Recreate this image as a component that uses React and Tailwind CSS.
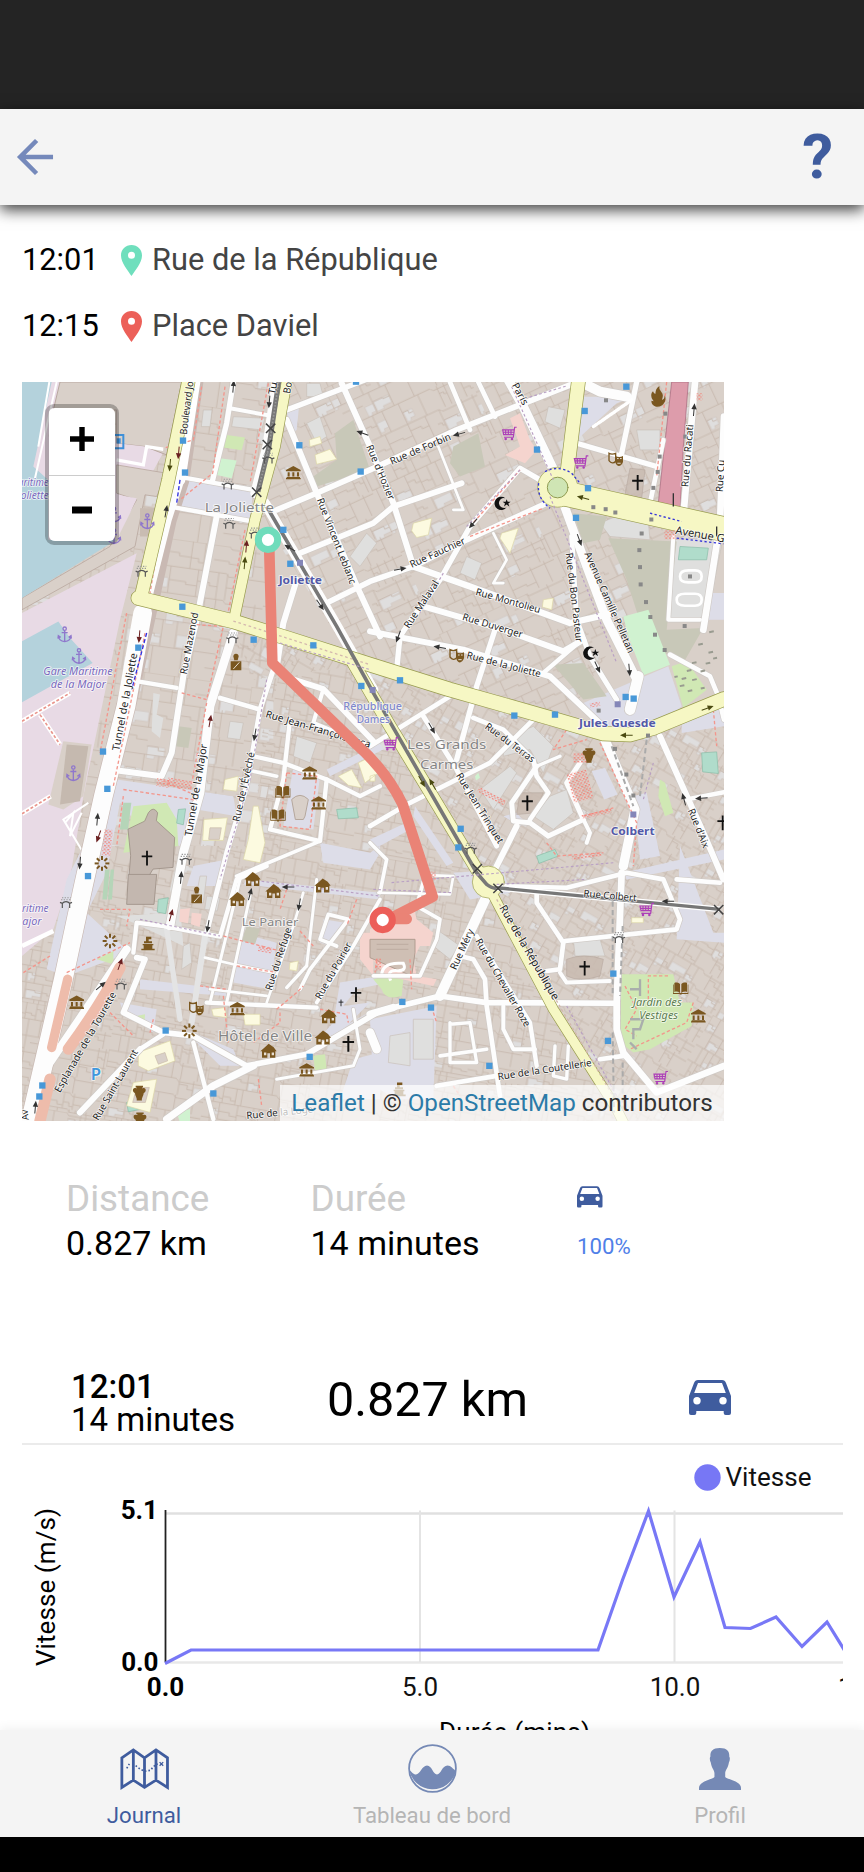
import React from "react";
import { IoMdArrowBack } from "react-icons/io";

/* ---------- map data (map units, three per pixel) ---------- */

function lots(seed, size, step) {
  let s = seed;
  const rnd = () => {
    s = (s * 16807) % 2147483647;
    return s / 2147483647;
  };
  let lines = "";
  let courts = "";
  const rowH = step * 1.7;
  for (let y = 0; y < size - 1; y += rowH) {
    let x = rnd() * step;
    lines += `M0 ${y.toFixed(0)}H${(size * 0.7).toFixed(0)}l8 9H${size}`;
    while (x < size) {
      const w = step * (0.5 + rnd() * 1.4);
      const mid = y + rowH * (0.3 + rnd() * 0.4);
      if (rnd() > 0.12) lines += `M${x.toFixed(0)} ${y.toFixed(0)}V${(y + rowH).toFixed(0)}`;
      if (rnd() > 0.45) lines += `M${x.toFixed(0)} ${mid.toFixed(0)}h${(w * 0.6).toFixed(0)}v${(4 + rnd() * 8).toFixed(0)}h${(w * 0.4).toFixed(0)}`;
      if (rnd() > 0.84) {
        courts += `M${(x + 3).toFixed(0)} ${mid.toFixed(0)}h${(w * 0.9).toFixed(0)}v${(rowH * 0.35).toFixed(0)}h-${(w * 0.5).toFixed(0)}v8h-${(w * 0.4).toFixed(0)}z`;
      }
      x += w;
    }
  }
  return { lines, courts };
}

const districts = [
  { id: "west", seed: 71, size: 408, step: 48, rot: 8, d: "M6 6H760L700 420L760 720V1400H6Z" },
  { id: "north", seed: 913, size: 408, step: 40, rot: -25, d: "M760 6H2112V420L1800 760L1640 1020L1000 850L720 400Z" },
  { id: "center", seed: 337, size: 306, step: 30, rot: 30, d: "M640 740L1300 950L1840 1060L2112 960V2226H1820L1400 1500L1000 860L700 900Z" },
  { id: "south", seed: 5501, size: 306, step: 29, rot: 10, d: "M6 1400H700L740 900L1000 860L1400 1500L1820 2226H6Z" },
];

const white = [
  [16, "640,6 620,130 578,300"], [12, "630,85 740,105"], [13, "475,290 700,330"], [13, "450,380 700,425"],
  [18, "590,410 530,720 490,890 455,1120 425,1190 270,1170"],
  [16, "800,90 970,25 1060,-10"], [18, "965,10 1050,200 1120,370 1180,560"], [18, "800,120 890,340 1020,640 1080,770"],
  [17, "770,390 890,340 1050,270 1310,150 1650,15"], [17, "840,520 1060,430 1120,380 1325,310"],
  [17, "920,670 1050,605 1180,560 1340,480 1580,370"], [18, "830,600 790,730 772,850"],
  [14, "1290,6 1350,150"], [14, "1375,6 1425,110"], [28, "1465,0 1510,80 1610,290"], [26, "1630,370 1700,560 1760,720 1850,900"],
  [16, "1560,300 1500,265 1350,440 1260,600 1160,740 1140,770 1130,870"],
  [19, "1180,560 1350,620 1650,730 1780,700"], [15, "1655,470 1670,720 1710,830 1790,960"],
  [18, "1210,680 1450,750 1630,815 1690,780"], [13, "1570,880 1680,785"], [16, "1670,190 1910,260"], [16, "1850,6 1805,220"],
  [14, "1930,180 1890,370"], [20, "2025,6 1990,410"], [20, "2112,110 2100,430 2050,750"], [30, "1690,10 1740,35 1820,50"],
  [8, "1255,200 1330,390 1300,390"], [8, "1420,460 1460,540 1420,610 1450,610"], [12, "1960,470 1945,720 2040,720"],
  [18, "1050,755 1330,810 1590,890 1770,1060"], [16, "1425,750 1370,920 1310,1140"], [14, "1290,950 1050,1100"],
  [15, "1210,1010 1310,1170 1430,1400"], [14, "1360,1015 1450,1050 1540,1140 1550,1190 1585,1240 1530,1320"],
  [14, "1540,1020 1410,1150 1170,1270 1050,1340"], [15, "1550,1160 1475,1270 1480,1325 1530,1330 1585,1370 1690,1320 1640,1210 1680,1150"],
  [12, "1690,1320 1710,1360 1700,1390"], [18, "1490,1340 1420,1480"], [10, "1550,1160 1620,1130"],
  [28, "1750,1070 1845,1290 1810,1460"], [18, "1920,1070 2050,1360 2110,1500"], [13, "2000,1260 2112,1238"],
  [14, "1950,825 2070,890 2095,950 2112,1020"], [32, "1855,890 1830,990"],
  [13, "340,903 470,925"], [14, "600,955 720,990"], [26, "640,760 570,980 540,1240 490,1420 450,1640"],
  [15, "760,870 720,990 680,1220 620,1420 560,1660"], [17, "790,890 910,928 1060,1085"], [12, "910,928 880,1030 1050,1100"],
  [13, "810,1020 790,1200 750,1350 900,1385 920,1200 790,1150 700,1130"], [13, "920,1200 1020,1250 1080,1220"], [11, "700,1175 770,1190"],
  [11, "900,1385 650,1490"], [13, "340,1720 350,1630 430,1640 600,1672 650,1500 740,1460"], [24, "320,1710 90,2050 60,2100"],
  [17, "350,1735 375,1740 310,1900 430,1960 520,1970 680,2060 860,2025 1080,1895 1260,1850 1400,1870 1780,1872"],
  [14, "360,2010 430,1965"], [22, "700,2060 580,2120 440,2220"], [13, "520,1990 580,2220"], [13, "560,1870 890,1885"],
  [9, "660,1500 570,1870"], [9, "690,1550 620,1870"], [8, "555,1735 640,1755 760,1780"], [8, "570,1830 740,1850"], [8, "740,1870 820,1640 850,1540"],
  [9, "890,1500 860,1760"], [11, "840,1830 870,1770 985,1620 925,1605 900,1680 950,1700"], [11, "890,1870 1000,1700 1080,1560"],
  [9, "1000,1890 1020,2010 1000,2060 770,2100"], [18, "360,2010 180,2200"], [10, "860,1760 800,1825"],
  [30, "1400,1550 1260,1850"], [14, "1320,1730 1360,1740 1395,1800 1400,1880 1440,2150"], [12, "1450,1880 1450,1950 1480,2010 1545,2010"],
  [13, "1370,1670 1530,1930 1550,2060"], [14, "1550,1530 1550,1570 1630,1690 1620,1770 1580,1775"],
  [14, "1635,1685 1970,1650 1980,1620 1930,1500 1820,1480 1640,1525 1440,1520"], [12, "1620,1780 1640,1810 1770,1805"],
  [20, "1805,1480 1790,1870 1790,1950 1810,2020 1910,2140 2112,2060"], [14, "1740,2040 1810,2030"], [14, "1250,2120 1430,2090"],
  [11, "1260,2030 1400,2010"], [10, "1290,1930 1290,2050 1370,2050 1350,1930 1290,1935"], [10, "1605,2000 1600,2090 1640,2100 1645,2000"],
  [11, "1220,1470 1190,1580 1260,1620 1250,1680 1200,1790 1060,1790"], [11, "1080,1540 1100,1440 1050,1390"], [8, "1075,1540 1290,1545 1300,1490 1240,1488"],
  [22, "1050,1905 1120,1885"], [26, "1050,1960 1070,2010"], [14, "2100,1510 1970,1500"],
];

const yellow = [
  [38, "505,6 445,300 362,655"], [30, "800,6 765,200 705,420 640,730"],
  [42, "355,655 640,725 800,775 1050,855 1290,930 1600,1018 1750,1062 1830,1065 1900,1045 2112,958"],
  [36, "1000,850 1110,1040 1370,1470 1405,1510"], [28, "1410,1530 1600,1890 1790,2190 1810,2230"], [40, "1675,6 1640,290 1620,320"],
];

const stops = [
  [489, 182], [495, 278], [487, 681], [838, 196], [1008, 5], [1022, 275], [790, 450], [811, 552], [1819, 20], [1694, 93],
  [1551, 209], [1704, 325], [1668, 414], [701, 780], [880, 797], [1024, 919], [355, 804], [249, 1116], [262, 1228], [204, 1490],
  [1140, 902], [1483, 1008], [1605, 1005], [1817, 952], [1841, 957], [1322, 1348], [1315, 1404], [437, 1954], [67, 2119], [58, 2152],
  [869, 2033], [580, 2143], [1147, 1868], [1233, 1885], [1780, 1783], [1764, 1985], [1408, 2060],
];

const places = [
  { t: "La Joliette", x: 658, y: 397, s: 40, w: 208 },
  { t: "Les Grands", x: 1280, y: 1108, s: 40, w: 238 },
  { t: "Carmes", x: 1280, y: 1167, s: 40, w: 160 },
  { t: "Le Panier", x: 750, y: 1640, s: 34, w: 170 },
  { t: "Hôtel de Ville", x: 735, y: 1984, s: 42, w: 282 },
];

const stations = [
  { t: "Joliette", x: 841, y: 614, w: 130 },
  { t: "République", x: 1058, y: 990, w: 176, light: true },
  { t: "Dames", x: 1060, y: 1029, w: 100, light: true },
  { t: "Jules Guesde", x: 1792, y: 1042, w: 230 },
  { t: "Colbert", x: 1838, y: 1367, w: 132 },
];

const harbour = [
  { t: "aritime", x: 40, y: 318, w: 92 }, { t: "oliette", x: 44, y: 358, w: 84 },
  { t: "Gare Maritime", x: 174, y: 885, w: 208 }, { t: "de la Major", x: 175, y: 925, w: 166 },
  { t: "ritime", x: 46, y: 1597, w: 80 }, { t: "ajor", x: 36, y: 1637, w: 58 },
];

const streets = [
  ["Boulevard Jo", 500, 165, 520, 5, 30], ["Tu", 765, 45, 772, 8, 30], ["Bo", 810, 42, 816, 8, 30],
  ["Rue Vincent Leblanc", 890, 360, 990, 615, 30], ["Rue d'Hozier", 1038, 200, 1106, 362, 30], ["Rue de Forbin", 1115, 255, 1295, 178, 30],
  ["Rue Fauchier", 1175, 565, 1338, 490, 30], ["Paris", 1475, 15, 1508, 78, 30], ["Rue du Racati", 2005, 322, 2020, 135, 30],
  ["Rue Cu", 2108, 337, 2114, 240, 30], ["Avenue G", 1965, 462, 2112, 488, 33], ["Rue Malaval", 1167, 748, 1258, 610, 30],
  ["Rue Montolieu", 1365, 645, 1558, 700, 30], ["Rue Duverger", 1325, 720, 1505, 775, 30], ["Rue du Bon Pasteur", 1637, 520, 1668, 788, 30],
  ["Avenue Camille Pelletan", 1693, 522, 1825, 822, 30], ["Rue de la Joliette", 1338, 836, 1560, 893, 30],
  ["Tunnel de la Joliette", 298, 1115, 352, 822, 31], ["Rue Mazenod", 500, 885, 535, 700, 30], ["Tunnel de la Major", 515, 1372, 562, 1095, 31],
  ["Rue de l'Évêché", 658, 1328, 704, 1120, 30], ["Rue Jean-François Leca", 735, 1012, 1048, 1105, 30],
  ["Rue du Terras", 1393, 1045, 1535, 1150, 30], ["Rue Jean Trinquet", 1307, 1188, 1435, 1395, 30], ["Rue d'Aix", 2003, 1292, 2050, 1408, 30],
  ["Esplanade de la Tourette", 120, 2142, 290, 1845, 30], ["Rue Saint-Laurent", 235, 2226, 355, 2018, 30], ["Rue du Refuge", 755, 1835, 815, 1648, 30],
  ["Rue du Poirier", 902, 1862, 996, 1697, 30], ["Rue Méry", 1308, 1774, 1362, 1655, 30], ["Rue du Chevalier Roze", 1365, 1685, 1515, 1945, 30],
  ["Rue de la République", 1437, 1585, 1600, 1865, 33], ["Rue Colbert", 1690, 1552, 1848, 1566, 30], ["Rue de la Coutellerie", 1435, 2103, 1716, 2060, 30],
  ["Rue de la Loge", 680, 2220, 880, 2200, 30], ["Av", 26, 2222, 22, 2190, 28],
];

const museums = [[820, 278], [869, 1180], [896, 1270], [170, 1869], [652, 1888], [860, 2072], [2035, 1910]];
const houses = [[698, 1500], [761, 1536], [652, 1560], [908, 1519], [926, 1912], [909, 1976], [746, 2016]];
const crosses = [[1853, 308, 46], [381, 1436, 44], [1522, 1271, 46], [1694, 1767, 44], [1008, 1846, 44], [985, 1994, 48], [963, 1871, 20], [2108, 1330, 44]];
const anchors = [[382, 425], [134, 765], [177, 830], [160, 1182], [282, 405], [282, 470]];
const carts = [[1468, 160], [1683, 246], [1113, 1092], [1880, 1590], [1922, 2095]];
const books = [[788, 1236], [774, 1306], [1982, 1826]];
const masks = [[1787, 238], [1310, 828], [529, 1888]];
const vases = [[1707, 1128], [358, 2142], [360, 2222]];
const suns = [[246, 1452], [270, 1685], [508, 1955]];
const arches = [[623, 318], [628, 436], [705, 465], [365, 580], [637, 780], [497, 1445], [138, 1575], [302, 1820], [745, 240], [1797, 1680], [1352, 1412]];
const arrows = [
  [450, 255, 95, "#4a4a10"], [476, 218, 95, "#6a2020"], [438, 395, -80, "#333"], [679, 500, -85, "#6a2020"], [674, 550, -85, "#4a4a10"],
  [640, 20, -85, "#333"], [748, 65, 95, "#333"], [810, 505, 210, "#333"], [900, 675, 55, "#333"], [1028, 160, 200, "#333"], [1318, 162, 165, "#333"],
  [1140, 568, -10, "#333"], [1360, 430, 130, "#333"], [1690, 354, 195, "#4a4a10"], [1678, 480, 70, "#333"], [2022, 90, -85, "#333"],
  [1135, 770, 110, "#333"], [1260, 803, 190, "#333"], [1732, 862, 65, "#333"], [1828, 870, 85, "#333"], [1820, 1067, 180, "#4a4a10"],
  [2062, 986, -20, "#4a4a10"], [1235, 1045, 60, "#333"], [1992, 1260, -105, "#333"], [2045, 1256, 175, "#333"], [358, 770, 95, "#6a2020"],
  [570, 1025, -80, "#6a2020"], [705, 1065, 100, "#333"], [232, 1320, -85, "#333"], [236, 1370, 110, "#6a2020"], [180, 1450, 95, "#333"],
  [483, 1495, -85, "#333"], [453, 1608, -75, "#6a2020"], [564, 1640, 100, "#333"], [805, 1523, 180, "#333"], [838, 1575, 100, "#333"],
  [690, 1545, -75, "#333"], [300, 1755, -70, "#6a2020"], [242, 1820, -40, "#333"], [46, 2185, -85, "#333"], [1945, 1566, 180, "#333"],
  [1205, 1205, 60, "#4a4a10"], [1238, 1215, 240, "#4a4a10"],
];

const red = [
  "545,20 520,180 430,205", "745,10 690,310", "615,20 578,280 480,360", "675,450 620,720", "430,400 390,640", "320,700 240,1120",
  "375,760 330,980 280,1220", "530,735 610,740 560,960 485,940", "560,970 510,1240 430,1205", "310,1230 530,1262", "800,1180 890,1190 870,1350 780,1340 800,1180",
  "1350,470 1570,385", "1350,440 1500,270", "1740,1090 1850,1330 1840,1460", "1560,1025 1640,1050 1600,1110 1700,1080", "1690,1310 1780,1285",
  "1580,1390 1610,1430 1750,1420", "2080,990 2090,1100", "610,1670 780,1715", "650,1760 760,1778", "540,1820 620,1830", "800,1530 780,1590",
  "840,1655 880,1700", "1010,1560 980,1640", "770,1890 830,1840 850,1820", "780,1900 780,1930 700,1990", "900,1890 980,1905 985,1930",
  "10,1780 90,1730", "140,1780 330,1690", "240,1590 330,1590 320,1640", "310,1250 290,1400", "270,1900 340,1970", "1815,1820 1850,1890 1815,1950 1850,1970",
  "1885,1860 1885,1790 1950,1790", "2020,1870 2000,1930 1830,2010", "1070,1740 1065,1780", "1170,1740 1175,1830", "1240,1900 1250,1930",
  "715,2100 725,2180", "1300,2120 1320,2150", "1940,6 1910,290", "610,1850 625,1990", "400,1920 390,1960",
];
const hatch = [
  [430, 1210, 40, 24, 10], [478, 1212, 70, 24, 10], [262, 1390, 26, 80, 6], [735, 1710, 40, 18, 10], [1415, 1250, 90, 16, 28],
  [1700, 1430, 90, 12, -8], [1730, 1303, 90, 12, -12], [1950, 465, 34, 26, 0], [1230, 1490, 34, 26, 0], [1075, 1755, 16, 36, 0],
  [1680, 1220, 60, 90, -15], [1685, 1135, 50, 30, 0], [2038, 50, 18, 22, 0], [1725, 975, 30, 12, -10],
];

const posts = [
  [1720, 382], [1757, 388], [1786, 398], [1894, 419], [1865, 461], [1858, 511], [1860, 562], [1862, 614], [1878, 667], [1891, 712],
  [1905, 765], [1934, 811], [1994, 739], [2010, 590], [1936, 101], [1919, 230], [1913, 276], [1900, 324], [1736, 993], [1884, 1068],
  [1785, 1108], [1819, 1185], [1840, 1248], [1758, 61], [1996, 170],
];

const Street = ({ d }) => {
  const [t, x1, y1, x2, y2, s] = d;
  const len = Math.hypot(x2 - x1, y2 - y1);
  const a = (Math.atan2(y2 - y1, x2 - x1) * 180) / Math.PI;
  return (
    <text transform={`translate(${x1} ${y1}) rotate(${a.toFixed(2)})`} fontSize={s} textLength={len.toFixed(0)} lengthAdjust="spacingAndGlyphs" fill="#1f1f1f">
      {t}
    </text>
  );
};

const Centered = ({ d, size, ...rest }) => (
  <text x={d.x - d.w / 2} y={d.y} fontSize={size} textLength={d.w} lengthAdjust="spacingAndGlyphs" {...rest}>
    {d.t}
  </text>
);

function MapDrawing() {
  return (
    <svg viewBox="6 6 2106 2220" preserveAspectRatio="none" className="block h-full w-full" fontFamily="'Noto Sans', sans-serif">
      <defs>
        {districts.map((p) => {
          const l = lots(p.seed, p.size, p.step);
          return (
            <pattern key={p.id} id={p.id} width={p.size} height={p.size} patternUnits="userSpaceOnUse" patternTransform={`rotate(${p.rot})`}>
              <path d={l.courts} fill="#dfdede" stroke="#cbbfb7" strokeWidth="1.5" />
              <path d={l.lines} fill="none" stroke="#c5b6ab" strokeWidth="2.4" />
            </pattern>
          );
        })}
        <pattern id="redhatch" width="11" height="11" patternUnits="userSpaceOnUse">
          <path d="M0 2h6M6 7h4" stroke="#f3857b" strokeWidth="3.6" />
        </pattern>
        <g id="museum" fill="#7a5720"><path d="M0-20L22-8V-4H-22V-8ZM-17-1h6v13h-6zM-3-1h6v13h-6zM11-1h6v13h-6zM-20 13h40v3h2v4h-44v-4h2z" /></g>
        <g id="house" fill="#7a5720"><path d="M-13-10L0-22L15-12L24 0H20V20H4V6H-4V20H-20V0H-25Z" /><path d="M-14 4h7v8h-7zM9 4h7v8h-7z" fill="#e8dfd2" /></g>
        <g id="anchor" fill="none" stroke="#8f77cc" strokeWidth="4"><circle cy="-18" r="5" /><path d="M0-12V20M-9-6H9M-19 4C-18 16-9 20 0 21C9 20 18 16 19 4M-20 12L-19 3L-12 8M20 12L19 3L12 8" /></g>
        <g id="cart" fill="none" stroke="#ad3fb8" strokeWidth="3.5"><path d="M22-18H16L12 12H-16M14-10H-20L-17 4H12M-17-3H13M-11-10V4M-3-10V4M5-10V4" /><circle cx="-11" cy="17" r="2" /><circle cx="8" cy="17" r="2" /></g>
        <g id="book" fill="#7a5720"><path d="M-2-12C-8-17-15-17-19-15V12C-13 10-7 11-2 15ZM2-12C8-17 15-17 19-15V12C13 10 7 11 2 15ZM-23-10V18H-3V20H3V18H23V-10H21V15H-21V-10Z" /></g>
        <g id="mask"><path d="M-20-18C-13-14-6-15 0-18V6C-6 14-14 12-20 4Z" fill="none" stroke="#7a5720" strokeWidth="4" /><path d="M-1-10C7-6 15-6 22-10V8C16 24 4 24-1 10Z" fill="#7a5720" /><path d="M4-2h5M13-2h5M5 12h10" stroke="#e8dfd2" strokeWidth="3" /></g>
        <g id="vase" fill="#7a5720"><path d="M-11-22H11V-17H8V-14C22-20 22-3 13 0C12 10 6 14 8 22H-8C-6 14-12 10-13 0C-22-3-22-20-8-14V-17H-11Z" /></g>
        <g id="sun" stroke="#7a5720" strokeWidth="6">{[0, 45, 90, 135, 180, 225, 270, 315].map((a) => <path key={a} d="M0-10V-22" transform={`rotate(${a})`} />)}</g>
        <g id="arch" fill="none" stroke="#555" strokeWidth="3.5"><path d="M-11 11V-3C-6-10 6-10 11-3V11M-18-6L-11-3M18-6L11-3" /><path d="M-15-14H15M-12-20H14" strokeDasharray="4 4" stroke="#999" /></g>
        <g id="artist" fill="#7a5720"><path d="M-7-18a8 8 0 1 1 14 0l-2 8H-5ZM-16-7H16V20H-16Z" /><path d="M-8 16L10-4" stroke="#e8dfd2" strokeWidth="3" /></g>
        <g id="monument" fill="#7a5720"><path d="M-6-20H10V-12H2V-6H12V0H-12V-6H-6ZM-16 2H16V6H13V16H20V21H-20V16H-13V6H-16Z" /></g>
      </defs>

      <rect x="0" y="0" width="2120" height="2240" fill="#d9d0c9" />
      {districts.map((p) => <path key={p.id} d={p.d} fill={`url(#${p.id})`} />)}

      {/* port */}
      <path d="M6 6H120L85 170L290 170L440 200L340 380L6 640ZM6 700L350 520L300 720L190 1250L150 1500L100 1650L6 1730Z" fill="#e8dae5" />
      <path d="M120 6H485L440 225L375 200L290 190V90H100Z" fill="#d9d0c9" stroke="#b9a8a0" strokeWidth="3" />
      <path d="M290 255L440 280L410 350L375 345L345 500L6 690V655L270 500L350 360L290 340Z" fill="#d9d0c9" stroke="#b9a8a0" strokeWidth="2.5" />
      <path d="M290 345L350 355L330 400L290 480Z" fill="#e8dae5" />
      <path d="M6 6H95L40 260L85 300V480H290L6 655ZM6 785L115 725L150 775L218 850L6 968Z" fill="#b4d2dc" />
      <path d="M110 6L45 295M88 6L55 200" stroke="#fff" strokeWidth="6" />
      <path d="M130 1085L215 1095L190 1250L130 1290L85 1275Z" fill="#d9d0c9" />
      <path d="M140 1095L205 1100L180 1265L120 1275Z" fill="#c5b9af" />
      <path d="M6 1025L150 940M60 1005L120 1095M6 1303L92 1250M6 1700L100 1655" stroke="#fff" strokeWidth="14" />
      <path d="M6 1025L150 940M60 1005L120 1095M6 1303L92 1250" stroke="#e9958c" strokeWidth="5" strokeDasharray="9 6" />
      <path d="M205 1270L130 1320L190 1420M135 1330L160 1300L150 1370L185 1300" fill="none" stroke="#fff" strokeWidth="6" />
      <path d="M360 385h45v85h-45z" fill="#c9bcb2" />
      <path d="M290 190L375 200L370 255L290 240Z" fill="#e8dae5" />
      <path d="M290 240L370 255L380 200L430 208" fill="none" stroke="#fff" strokeWidth="10" />

      {/* squares and open ground */}
      <g fill="#dddde8">
        <path d="M485 300L700 335L690 415L455 378Z" />
        <path d="M800 95L838 70L830 150L815 160Z" />
        <path d="M1690 50H1840L1790 70L1670 180Z" />
        <path d="M1690 970L1850 900L1945 860L1985 980L1910 1050L1770 1060Z" />
        <path d="M1985 990L2112 960V1040L1985 1060Z" />
        <path d="M290 1200L640 1250L650 1310L530 1290L480 1400L390 1380L300 1270L260 1480L200 1600L330 1720L140 1790L80 1770L140 1500Z" />
        <path d="M820 1160L900 1190L880 1350L790 1340Z" />
        <path d="M920 1170L1080 1090L1090 1110L930 1190Z" />
        <path d="M900 1390L1050 1420L1080 1400V1420L1050 1470L910 1450Z" />
        <path d="M680 1500L1080 1540V1560L670 1515ZM660 1660L770 1690L750 1830L640 1810Z" />
        <path d="M360 1800L620 1830V1850L360 1830ZM300 1870L410 1890L400 1960L310 1900Z" />
        <path d="M910 1620L975 1630L930 1700L900 1690Z" />
        <path d="M1080 1880L1000 1930L880 2000L940 1960Z" />
        <path d="M960 1810L1080 1790V1815L1010 1830L970 1880L1050 1870L960 1960L890 1985L940 1930Z" />
        <path d="M520 1960L640 2010L660 2060L600 2060L530 1990Z" />
        <path d="M1000 2040L1080 2020V2160H960Z" />
        <path d="M1050 1920L1250 1880L1240 2160H1130L1060 2120Z" />
        <path d="M1810 1480L2112 1410V1440L1820 1500ZM1980 1400L2080 1660H2112V1690L1970 1680Z" />
        <path d="M1715 1175l40-10 38 80-40 15zM1450 1310L1500 1340L1515 1330L1490 1300ZM1840 1250L1880 1240L1920 1430L1860 1440Z" />
        <path d="M1185 1280L1300 1450L1280 1460L1180 1310ZM1050 1380L1180 1320V1345L1060 1410Z" />
        <path d="M1300 1480L1450 1470L1470 1540L1350 1560Z" />
        <path d="M520 1460L620 1440L600 1520H500Z" />
        <path d="M2065 640H2112V720H2060Z" />
      </g>
      <g fill="#dfdfde" stroke="#c9bfb8" strokeWidth="2">
        <path d="M550 90h26l-6 50h-26zM860 10h40l10 40h-50zM860 130l40-20 20 60-30 20zM1040 460l30 30-50 70-30-30z" />
        <path d="M640 110L735 115L725 150L635 140ZM1340 530l45 20-20 50-45-20zM1585 80l50 10-15 55-45-20zM1850 150h70v60h-60z" />
        <path d="M1740 430L1880 370L1890 480L1770 470ZM1450 1080L1540 1040L1600 1100L1570 1180L1530 1110L1450 1130ZM1380 1230L1470 1160L1490 1180L1420 1290Z" />
        <path d="M1590 1250L1640 1230L1660 1300L1600 1350L1540 1310Z" />
        <path d="M1955 480L2110 470L2060 720H1940Z" />
        <path d="M1980 590q0-18 25-18h20q20 0 20 18t-20 18h-20q-25 0-25-18zM1970 660q0-18 25-18h30q20 0 20 18t-20 18h-30q-25 0-25-18z" stroke="#fff" strokeWidth="8" />
        <path d="M1250 1650L1320 1700L1290 1740L1240 1700ZM1110 1970L1170 1960V2060L1105 2050ZM1180 1920h60v120h-60zM1660 1680h80l15 50h-90z" />
        <path d="M490 1700l20-10 5 60-30 20zM540 1490h20l-10 80h-25zM560 1550l40 5-8 40-38-5zM830 1070l60 20-20 60-50-20zM630 1025l40 5-10 50-38-5z" />
        <path d="M290 1610L470 1600L450 1530L470 1450L490 1700L340 1630Z" stroke="none" />
        <path d="M400 940l20 5-10 60 20 10-10 60-25-20z" stroke="none" />
      </g>

      {/* greens */}
      <path d="M945 160L1000 120L1050 270L890 320L880 290L950 240Z" fill="#c8c8b8" />
      <path d="M1300 200L1375 160L1395 260L1320 290L1290 250ZM1660 400L1760 410L1740 480L1690 490ZM1765 475L1970 485L1940 750L2050 745L1990 850L1880 790L1820 600ZM1600 855L1690 850L1760 950L1690 960ZM475 1040l40 5-10 60-38-5zM680 1640l40 10-15 45-40-10z" fill="#c8c8b8" />
      <path d="M600 235L650 242L635 295L590 285ZM1810 710L1885 690L1950 855L1870 887L1825 770ZM1365 1190l10-10 5 15-12 8zM470 2200l40-10v40h-30z" fill="#d0f2d0" />
      <path d="M1955 860L2000 845L2060 930L1990 985ZM1920 1200l15 10 25 90-25 10-20-60zM620 165l55 8-10 38-55-8zM340 1280L440 1270L470 1320L475 1400L310 1420ZM350 1910l25-5-2 30-30-10zM230 1740l50-25v40zM880 2030l35-5 5 45-35 5zM1060 1800q40-15 90 0l-5 50q-50 15-60-20zM1805 1785L1960 1785L1980 1870H2020L2015 1940L1890 2010L1840 2020L1800 1990Z" fill="#d0e8b4" />
      <path d="M1980 500L2065 505L2060 540L1975 540ZM2045 1120l45-3 5 65-47-5zM1550 1430l55-20 10 20-58 22zM475 1290l22-2-7 48-20-5zM415 1560l30-5-8 48-25-5zM950 1290l60-5 5 30-60 3zM320 2170l60-25-15 45-40 8z" fill="#b0dccb" stroke="#86bba6" strokeWidth="2" />
      <path d="M310 1270h12l-10 80h-12zM322 1270h12l-10 80h-12zM255 1470h14l-8 90h-14zM272 1470h10l-6 90h-12z" fill="#b5d5b8" />
      <g fill="#fcfae0" stroke="#dcd6a6" strokeWidth="2">
        <path d="M868 180l32-10 5 20-35 10zM885 225l45-17 20 30-60 15zM1180 430l55-15-10 50-35 8-15-20zM1445 460l50-15-25 75-30-45zM1570 660l30-5-5 35-28-8z" />
        <path d="M552 1320l70-5-12 68h-62zM615 1200l40-10-5 45-40-5zM700 1280h15l20 110-15 60-50-10 15-60zM955 1190l40-20 30 55-40-8zM1015 1150l40-20 20 50-40 30zM575 1890l40-5 5 30-40-5zM670 1905h50v32h-45zM355 2020l95-35 15 60-80 30-30-15zM340 2110l70-10-20 100-70-20zM810 1750l25-5-5 30-22-4zM1835 1615h35v15h-35zM1050 1190l15-5v20h-15z" />
      </g>
      <path d="M570 1345h34l-6 35h-32zM405 2030l30-10 8 25-28 10zM350 2125h38l-12 45h-38z" fill="#d9d0c9" stroke="#c9b9a8" strokeWidth="2" />
      <g fill="#f5d4ce">
        <path d="M1470 115L1500 100L1530 180L1550 210L1515 250L1455 225L1500 200Z" />
        <path d="M480 1590l30-3-6 45-26-5zM515 1600l30 3-6 40-26-8zM1050 1650L1180 1580L1190 1620L1240 1660L1230 1700H1200L1180 1740L1190 1790L1250 1800L1240 1820L1100 1790L1050 1730ZM1020 1660h40v130l-40-50z" />
      </g>
      <path d="M1050 1680H1185V1720L1175 1790L1050 1735Z" fill="#cfbfb4" stroke="#b09d91" strokeWidth="3" />
      <path d="M1070 1695h95M1070 1710h95" stroke="#b9a89c" strokeWidth="2.5" />
      <path d="M1085 1790q0-38 50-38h15q12 24-20 22t-18 30" fill="none" stroke="#fff" strokeWidth="9" />
      <path d="M1830 265l45 5-10 85-50-10zM1500 1240l70 0-25 60-55 5zM1640 1740q50-20 110 0l-10 50q-60 20-100 0z" fill="#c9bbb1" stroke="#b3a59b" strokeWidth="2" opacity="0.85" />
      <path d="M1955 6H2005L1990 200L1980 400L1915 370L1930 230Z" fill="#dd9cab" stroke="#a5647a" strokeWidth="2" />
      <path d="M385 1300q15-22 28 0l-4 24 55 50-5 90-60 5-12 20h-60l5-60-8-80 50-24z" fill="#c3b7af" stroke="#9c8f86" strokeWidth="2.5" />
      <path d="M325 1485h85l-8 90h-82z" fill="#c3b7af" stroke="#9c8f86" strokeWidth="2.5" />
      <path d="M815 1260q25-25 50 0l-10 50-5 10h-24z" fill="#d9d0c9" stroke="#b5a79c" strokeWidth="3" />

      {/* roads */}
      <g fill="none" strokeLinejoin="round" strokeLinecap="round">
        <g stroke="#cfcac6">{white.map(([w, p], i) => <polyline key={i} points={p} strokeWidth={w + 4} />)}</g>
        <g stroke="#e4e4e4"><path d="M440 1650L480 1920" strokeWidth="16" /><path d="M555 1670L515 1930" strokeWidth="18" /></g>
        <path d="M520 6L478 300L440 420L375 720L318 980L250 1250L190 1520L130 1800L30 2230" stroke="#c9b9b3" strokeWidth="60" />
        <path d="M525 6L480 300" stroke="#fff" strokeWidth="32" />
        <g stroke="#fdfdfd">
          {white.map(([w, p], i) => <polyline key={i} points={p} strokeWidth={w} />)}
          <path d="M478 300L440 420L385 640" strokeWidth="30" />
          <path d="M368 700L318 980L250 1250L190 1520L130 1800L30 2230" strokeWidth="56" />
          <path d="M770 6L742 200L706 340M735 370L940 720L1060 930" strokeWidth="30" />
        </g>
        <path d="M300 1765Q240 1880 145 2010M60 2225L90 2100" stroke="#eebcab" strokeWidth="34" />
        <path d="M143 1800L95 2005" stroke="#eebcab" strokeWidth="28" />
        <g stroke="#f3968c" strokeWidth="4" strokeDasharray="10 7" strokeLinecap="butt">{red.map((p) => <polyline key={p} points={p} />)}</g>
        <path d="M490 20L440 290M480 300L470 370M380 760L335 930" stroke="#2f2fe0" strokeWidth="4" strokeDasharray="12 7" strokeLinecap="butt" />
        <g stroke="#989b4e">{yellow.map(([w, p]) => <polyline key={p} points={p} strokeWidth={w + 4} />)}<path d="M1630 340L2120 450" strokeWidth="77" strokeLinecap="butt" /></g>
        <g fill="#f6f7c4" stroke="#989b4e" strokeWidth="2"><circle cx="1613" cy="322" r="60" /><circle cx="1405" cy="1508" r="48" /></g>
        <g stroke="#f6f7c4">{yellow.map(([w, p]) => <polyline key={p} points={p} strokeWidth={w} />)}<path d="M1630 340L2120 450" strokeWidth="73" strokeLinecap="butt" /></g>
        <circle cx="1613" cy="323" r="31" fill="#cfe5b4" stroke="#8f9a50" strokeWidth="3" />
        <path d="M1575 275Q1615 255 1655 280L1680 310M1556 310Q1550 355 1590 385" stroke="#3636d8" strokeWidth="4" strokeDasharray="7 7" strokeLinecap="butt" />
        <path d="M1970 475L2110 492M1890 400L1985 425" stroke="#3636d8" strokeWidth="4" strokeDasharray="7 7" strokeLinecap="butt" />
        <path d="M640 724L800 775L1050 855M1430 1560L1790 2170" stroke="#d4b9ae" strokeWidth="4" strokeDasharray="8 8" strokeLinecap="butt" />
        <g stroke="#777" strokeLinecap="butt">
          <path d="M776 6L747 200L714 335" strokeWidth="15" />
          <path d="M776 6L747 200L714 335" stroke="#999" strokeWidth="5" strokeDasharray="5 5" />
          <path d="M740 380L950 740L1060 940L1370 1480L1400 1515Q1420 1530 1430 1525" strokeWidth="11" />
          <path d="M1430 1525L2100 1590" stroke="#fff" strokeWidth="18" />
          <path d="M1430 1525L2100 1590" strokeWidth="10" />
        </g>
        <path d="M1835 60L1720 140" stroke="#fff" strokeWidth="10" strokeDasharray="10 4" />
        <path d="M1778 1540V1850M1808 1640L1800 1850M1778 1960L1782 2200M1808 2050V2200M1775 1100L1840 1280M1880 1080L1860 1250" stroke="#aaa" strokeWidth="6" strokeDasharray="16 10" strokeLinecap="butt" />
        <g stroke="#b9a0c4" strokeWidth="3.5" strokeDasharray="8 7" strokeLinecap="butt"><path d="M1475 20L1600 300M1500 60L1640 18M1590 350L1790 850M1340 440L1500 270M1270 580L1200 700M1060 1530L1300 1540M1430 1515L1700 1500M360 1620L600 1670M680 1500L1080 1550M740 900L690 1200L600 1500M1640 1880L1790 2150M780 790L1050 870M1900 1150L1870 1260M1780 1450L1112 1510" /></g>
      </g>
      {hatch.map(([x, y, w, h, r]) => <rect key={`${x}-${y}`} x={x - w / 2} y={y - h / 2} width={w} height={h} fill="url(#redhatch)" transform={`rotate(${r} ${x} ${y})`} />)}
      <path d="M1980 890h14M2000 870h14M2020 850h14M1970 910h14M2010 900h14M2040 880h14M1990 930h14M2060 860h14M2075 830h14M2050 800h14M2090 770h14M1960 880h10M2030 930h12M2085 850h12" stroke="#999b90" strokeWidth="6" transform="rotate(-12 2020 870)" />
      <path d="M1830 1830h30v20M1860 1800v30M1830 1920h40l-10 30h-20v30M1830 1990l20 20" fill="none" stroke="#a9aeac" strokeWidth="7" />
      <g fill="#888">{posts.map(([x, y]) => <rect key={`${x}${y}`} x={x - 6} y={y - 6} width="12" height="12" />)}</g>
      <path d="M2090 440v30M1960 340v40" stroke="#333" strokeWidth="4" />

      {/* symbols */}
      {arches.map(([x, y]) => <use key={`${x}${y}`} href="#arch" x={x} y={y} />)}
      {arrows.map(([x, y, r, c]) => <path key={`${x}-${y}`} d="M-18 -1.5H2V-8L20 0L2 8V1.5H-18Z" fill={c} transform={`translate(${x} ${y}) rotate(${r})`} />)}
      {[[752, 145], [742, 194], [710, 337], [1372, 1468], [1434, 1527], [2096, 1591]].map(([x, y]) => <path key={x} d={`M${x - 14} ${y - 14}l28 28m0-28l-28 28`} stroke="#444" strokeWidth="4.5" />)}
      {stops.map(([x, y]) => <rect key={`${x}${y}`} x={x - 9.5} y={y - 9.5} width="19" height="19" fill="#4898d8" />)}
      {[[840, 549], [1058, 931], [1793, 974], [1840, 1305]].map(([x, y]) => <rect key={x} x={x - 9} y={y - 9} width="18" height="18" fill="#8486b8" />)}
      <path d="M285 165h25v40h-25" fill="none" stroke="#3f90d8" strokeWidth="6" /><path d="M290 175h12v16h-12z" fill="#3f90d8" />
      {museums.map(([x, y]) => <use key={x} href="#museum" x={x} y={y} />)}
      {houses.map(([x, y]) => <use key={x} href="#house" x={x} y={y} />)}
      {anchors.map(([x, y]) => <use key={`${x}${y}`} href="#anchor" x={x} y={y} />)}
      {carts.map(([x, y]) => <use key={x} href="#cart" x={x} y={y} />)}
      {books.map(([x, y]) => <use key={x} href="#book" x={x} y={y} />)}
      {masks.map(([x, y]) => <use key={x} href="#mask" x={x} y={y} />)}
      {vases.map(([x, y]) => <use key={x} href="#vase" x={x} y={y} />)}
      {suns.map(([x, y]) => <use key={x} href="#sun" x={x} y={y} />)}
      <use href="#artist" x="648" y="852" /><use href="#artist" x="530" y="1552" />
      <use href="#monument" x="384" y="1692" /><use href="#monument" x="1137" y="2130" />
      {crosses.map(([x, y, h]) => <path key={x} d={`M${x} ${y - h / 2}V${y + h / 2}M${x - h * 0.36} ${y - h * 0.12}H${x + h * 0.36}`} stroke="#111" strokeWidth={h / 8} />)}
      {[[1444, 370], [1710, 820]].map(([x, y]) => (
        <g key={x} transform={`translate(${x} ${y})`}>
          <path d="M16 12A20 20 0 1 1 12 -15A15 15 0 1 0 16 12Z" fill="#111" />
          <path d="M16-12l3 8 9 0-7 5 3 9-8-6-8 6 3-9-7-5 9 0z" fill="#111" />
        </g>
      ))}
      <path d="M1658 60q-4-14 4-20 2 6 7 8 0-16 12-24-2 10 6 18t2 24q8-2 8-14 6 12-2 24-8 12-24 10-14-4-14-18l7 2q-4-6-6-10z" transform="translate(-8 8) translate(245 -14)" fill="#7a5720" />

      {/* labels */}
      <g stroke="#fff" strokeOpacity="0.75" strokeWidth="5" strokeLinejoin="round" paintOrder="stroke">
        {streets.map((d) => <Street key={d[0] + d[1]} d={d} />)}
        {harbour.map((d) => <Centered key={d.t + d.x} d={d} size={31} fill="#7a6abd" fontStyle="italic" />)}
        <text x="228" y="2103" fontSize="50" fontWeight="600" fill="#3f97dc" textAnchor="middle">P</text>
        <Centered d={{ t: "Jardin des", x: 1912, y: 1880, w: 146 }} size={31} fill="#5c7d50" fontStyle="italic" />
        <Centered d={{ t: "Vestiges", x: 1916, y: 1920, w: 116 }} size={31} fill="#5c7d50" fontStyle="italic" />
        {stations.map((d) => <Centered key={d.t} d={d} size={31} fill={d.light ? "#8088cc" : "#5259a8"} fontWeight={d.light ? 500 : 700} />)}
        {places.map((d) => <Centered key={d.t} d={d} size={d.s} fill="#858585" />)}
      </g>

      {/* trip */}
      <path d="M747 480L757 850L1010 1095Q1100 1175 1148 1275L1238 1552L1125 1610" fill="none" stroke="#ea8376" strokeWidth="32" strokeLinejoin="round" />
      <path d="M1095 1619H1160" stroke="#ea8376" strokeWidth="32" strokeLinecap="round" />
      <circle cx="744" cy="480" r="29" fill="#fff" stroke="#6fdcbb" strokeWidth="21" />
      <circle cx="1088" cy="1622" r="29" fill="#fff" stroke="#ec5f59" strokeWidth="21" />
    </svg>
  );
}

/* ---------- icons ---------- */

const Pin = ({ className }) => (
  <svg width="21" height="31" viewBox="0 0 21 31" className={className} fill="currentColor">
    <path fillRule="evenodd" d="M10.5 0C4.6 0 0 4.6 0 10.4C0 17.5 7 25.5 10.5 31C14 25.5 21 17.5 21 10.4C21 4.6 16.4 0 10.5 0ZM10.5 6.8a3.5 3.5 0 1 1 0 7a3.5 3.5 0 0 1 0-7Z" />
  </svg>
);

const Car = ({ width, height, className }) => (
  <svg width={width} height={height} viewBox="0 0 42 35" className={className} fill="#3f5c9e">
    <path fillRule="evenodd" d="M9 0H33Q36 0 37 3L42 16V33Q42 35 40 35H36.7Q34.7 35 34.7 33V31H7.3V33Q7.3 35 5.3 35H2Q0 35 0 33V16L5 3Q6 0 9 0ZM9 3L5.2 13H36.8L33 3ZM8 17a3.7 3.7 0 1 0 0 7.4a3.7 3.7 0 0 0 0-7.4ZM34 17a3.7 3.7 0 1 0 0 7.4a3.7 3.7 0 0 0 0-7.4Z" />
  </svg>
);

/* ---------- panels ---------- */

function Waypoint({ time, name, color }) {
  return (
    <div className="flex h-[66px] items-center">
      <span className="w-[99px] text-[30.8px] leading-none text-black">{time}</span>
      <span className="w-[31px]">
        <Pin className={color} />
      </span>
      <span className="text-[30.8px] leading-none text-[#444]">{name}</span>
    </div>
  );
}

function TripMap() {
  return (
    <div className="relative mt-[23px] ml-[22px] h-[740px] w-[702px] overflow-hidden">
      <MapDrawing />
      <div className="absolute top-[22px] left-[23px] h-[141px] w-[74px] rounded-[9px] border-4 border-black/25 bg-clip-padding">
        <div className="flex h-full flex-col overflow-hidden rounded-[6px] bg-white">
          <button className="flex flex-1 items-center justify-center border-b border-[#ccc] pb-[4px]" aria-label="+">
            <svg width="24" height="24" viewBox="0 0 24 24"><path d="M12 0v24M0 12h24" stroke="#000" strokeWidth="5.4" /></svg>
          </button>
          <button className="flex flex-1 items-center justify-center pt-[3px]" aria-label="-">
            <svg width="20" height="8" viewBox="0 0 20 8"><path d="M0 4h20" stroke="#000" strokeWidth="7" /></svg>
          </button>
        </div>
      </div>
      <div className="absolute right-0 bottom-0 flex h-[36px] w-[444px] items-center justify-center bg-white/70 text-[24.2px] whitespace-pre text-[#333]">
        <span className="text-[#2b7ba8]">Leaflet</span> | © <span className="text-[#2b7ba8]">OpenStreetMap</span> contributors
      </div>
    </div>
  );
}

const speed = "165,225.5 191,212 598,212 622.5,142 648.5,73 674,159 700,104 725,189.5 750.5,190.5 776,179 802,208.5 827,184 853,226";

function SpeedChart() {
  return (
    <svg width="843" height="291" viewBox="0 0 843 291" className="-mt-[6px] block shrink-0" fontFamily="Roboto, sans-serif" fontSize="26" fill="#000">
      <path d="M166 74.5H843" stroke="#e0e0e0" strokeWidth="2.5" />
      <path d="M166 223.5H843" stroke="#e8e8e8" strokeWidth="2.5" />
      <path d="M420 71.5V223M674.5 71.5V223" stroke="#e4e4e4" strokeWidth="2" />
      <path d="M165.5 71V223" stroke="#222" strokeWidth="1.8" />
      <polyline points={speed} transform="translate(0 -1)" fill="none" stroke="#7878f6" strokeWidth="3.2" />
      <circle cx="707.5" cy="38.5" r="13.2" fill="#7777f5" />
      <text x="725.5" y="47" textLength="86" fill="#111">Vitesse</text>
      <text x="158" y="79.5" textAnchor="end" fontWeight="700">5.1</text>
      <text x="158.5" y="231.5" textAnchor="end" fontWeight="700">0.0</text>
      <text x="165.5" y="257" textAnchor="middle" fontWeight="700">0.0</text>
      <text x="420" y="257" textAnchor="middle" fill="#111">5.0</text>
      <text x="675" y="257" textAnchor="middle" fill="#111">10.0</text>
      <text x="838" y="257" fill="#111">15.0</text>
      <text transform="translate(55 227) rotate(-90)" textLength="158">Vitesse (m/s)</text>
      <text x="439" y="302" textLength="151">Durée (mins)</text>
    </svg>
  );
}

function Tab({ label, color, children }) {
  return (
    <div className="flex flex-1 flex-col items-center">
      <div className="flex h-[77px] items-center justify-center">{children}</div>
      <span className={`-mt-[5px] text-[22.2px] leading-[26px] ${color}`}>{label}</span>
    </div>
  );
}

export default function App() {
  return (
    <div className="flex h-[1872px] w-[864px] flex-col overflow-hidden bg-white font-['Roboto',sans-serif] text-black">
      <div className="h-[109px] shrink-0 bg-[#242424]" />
      <header className="z-10 flex h-[96px] shrink-0 items-center justify-between bg-[#f4f4f4] pr-[31px] pl-[8px] shadow-[0_5px_14px_rgba(0,0,0,0.75)]">
        <IoMdArrowBack className="text-[#7589bb]" size={54} />
        <span className="text-[62px] leading-none font-bold text-[#3f5c9e]">?</span>
      </header>

      <main className="flex h-[1525px] shrink-0 flex-col overflow-hidden">
        <div className="pt-[22px] pl-[22px]">
          <Waypoint time="12:01" name="Rue de la République" color="text-[#6fdfbd]" />
          <Waypoint time="12:15" name="Place Daviel" color="text-[#ec6059]" />
        </div>

        <TripMap />

        <section className="mt-[55px] flex h-[90px] pl-[66px]">
          <div className="w-[244.5px]">
            <div className="text-[36.8px] leading-[45px] text-[#ccc]">Distance</div>
            <div className="text-[34px] leading-[44px]">0.827 km</div>
          </div>
          <div className="w-[266.5px]">
            <div className="text-[36.8px] leading-[45px] text-[#ccc]">Durée</div>
            <div className="text-[34px] leading-[44px]">14 minutes</div>
          </div>
          <div>
            <Car width="25.5" height="21.5" className="mt-[10px]" />
            <div className="mt-[25px] text-[22.2px] leading-[26px] text-[#5080e8]">100%</div>
          </div>
        </section>

        <section className="mt-[104px] mr-[21px] ml-[22px] flex h-[75px] shrink-0 border-b-2 border-[#ebebeb] pl-[49px]">
          <div className="w-[256px] text-[33px] leading-[33px]">
            <div className="font-medium">12:01</div>
            <div>14 minutes</div>
          </div>
          <div className="w-[362px] pt-[1px] text-[48.5px] leading-[58px]">0.827 km</div>
          <Car width="42" height="35" className="mt-[10px]" />
        </section>

        <SpeedChart />
      </main>

      <nav className="z-10 flex h-[107px] shrink-0 bg-[#f4f4f4] shadow-[0_-2px_10px_rgba(0,0,0,0.06)]">
        <Tab label="Journal" color="text-[#3f5c9e]">
          <svg width="49" height="42" viewBox="58 36 148 128" fill="none" stroke="#3f5c9e" strokeWidth="8.5">
            <path d="M63 66L98 42L132 66L167 42L202 66V156L167 134L132 156L98 134L63 156ZM98 42V134M132 66V156M167 42V134" />
            <path d="M78 98L86 84M105 90L118 100L132 107L150 104L160 92L172 84" strokeWidth="5" strokeDasharray="5 6" />
            <path d="M178 79L189 90M189 79L178 90" strokeWidth="4" />
          </svg>
        </Tab>
        <Tab label="Tableau de bord" color="text-[#b5b5b5]">
          <svg width="49" height="49" viewBox="0 0 49 49">
            <circle cx="24.5" cy="24.5" r="23.4" fill="none" stroke="#7589b5" strokeWidth="1.8" />
            <path d="M1 25C4 29 6 30.5 8 30.5C12 30.5 14 21.5 19 21.5C24 21.5 25 30.5 29 30.5C33 30.5 34 21.5 39.5 21.5C43 21.5 45 25 48 27A24 24 0 0 1 1 25Z" fill="#7589b5" />
          </svg>
        </Tab>
        <Tab label="Profil" color="text-[#b5b5b5]">
          <svg width="42" height="42" viewBox="915 37 125 125" fill="#7589b5">
            <path d="M977 37C1000 37 1006 48 1005 62C1008 66 1007 74 1004 80C1002 96 993 102 993 112V123C996 128 1020 132 1032 142C1041 149 1040 154 1040 162H915C915 154 914 149 923 142C935 132 958 128 961 123V112C961 102 952 96 950 80C947 74 946 66 949 62C948 48 954 37 977 37Z" />
          </svg>
        </Tab>
      </nav>
      <div className="flex-1 bg-black" />
    </div>
  );
}
